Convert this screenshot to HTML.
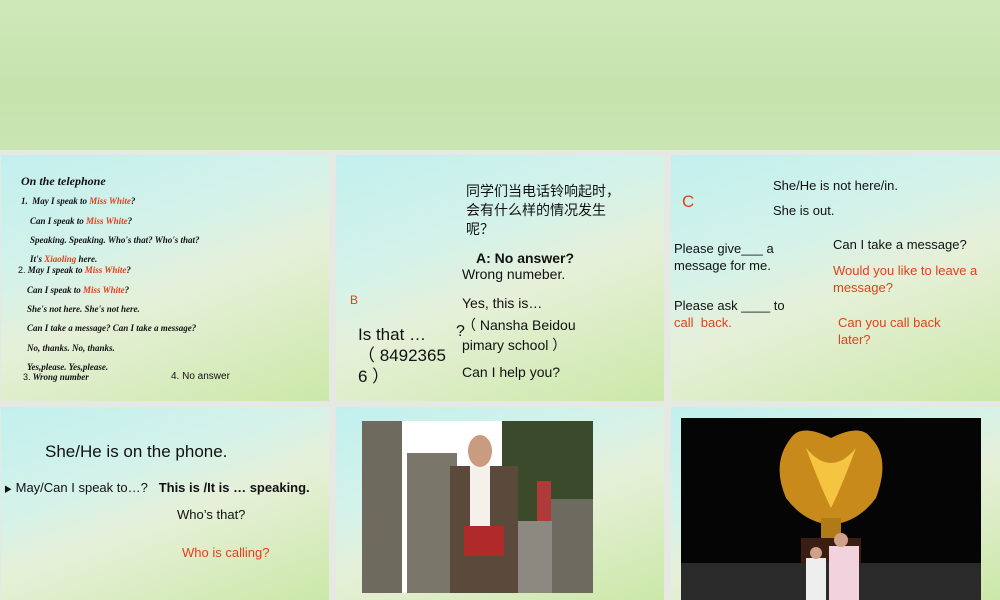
<!DOCTYPE html>
<html><head><meta charset="utf-8"><style>
*{margin:0;padding:0;box-sizing:border-box}
body{width:1000px;height:600px;overflow:hidden;background:#e6e9e3;position:relative;font-family:"Liberation Sans","Noto Sans CJK SC",sans-serif}
.top{position:absolute;left:0;top:0;width:1000px;height:150px;background:linear-gradient(180deg,#cfe8b8 0%,#c6e3ad 60%,#c9e5b2 100%)}
.p{position:absolute;background:linear-gradient(160deg,#c2f0ee 0%,#d4f2ea 35%,#e6f0d8 55%,#cbe8a8 100%);overflow:hidden}
.t{position:absolute;white-space:nowrap;color:#111}
.r{color:#e2401c}
.s{font-family:"Liberation Serif",serif;font-style:italic;font-weight:bold;font-size:9px}
</style></head><body>
<div class="top"></div>

<div class="p" style="left:1px;top:155px;width:328px;height:246px">
<div class="t s" style="left:20px;top:19px;font-size:12px">On the telephone</div>
<div class="t s" style="left:20px;top:41px">1.&nbsp; May I speak to <span class="r">Miss White</span>?</div>
<div class="t s" style="left:29px;top:61px">Can I speak to <span class="r">Miss White</span>?</div>
<div class="t s" style="left:29px;top:80px">Speaking. Speaking. Who's that? Who's that?</div>
<div class="t s" style="left:29px;top:99px">It's <span class="r">Xiaoling</span> here.</div>
<div class="t s" style="left:17px;top:110px"><span style="font-family:'Liberation Sans';font-style:normal;font-weight:normal">2.</span> May I speak to <span class="r">Miss White</span>?</div>
<div class="t s" style="left:26px;top:130px">Can I speak to <span class="r">Miss White</span>?</div>
<div class="t s" style="left:26px;top:149px">She's not here. She's not here.</div>
<div class="t s" style="left:26px;top:168px">Can I take a message? Can I take a message?</div>
<div class="t s" style="left:26px;top:188px">No, thanks. No, thanks.</div>
<div class="t s" style="left:26px;top:207px">Yes,please. Yes,please.</div>
<div class="t s" style="left:22px;top:217px"><span style="font-family:'Liberation Sans';font-style:normal;font-weight:normal">3.</span> Wrong number</div>
<div class="t" style="left:170px;top:216px;font-size:10px">4. No answer</div>
</div>

<div class="p" style="left:336px;top:155px;width:328px;height:246px">
<div class="t" style="left:130px;top:27px;font-size:14px;line-height:19px">同学们当电话铃响起时，<br>会有什么样的情况发生<br>呢？</div>
<div class="t" style="left:140px;top:95px;font-size:14px;font-weight:bold">A: No answer?</div>
<div class="t" style="left:126px;top:111px;font-size:14px">Wrong numeber.</div>
<div class="t r" style="left:14px;top:138px;font-size:12px">B</div>
<div class="t" style="left:126px;top:140px;font-size:14px">Yes, this is…</div>
<div class="t" style="left:126px;top:160px;font-size:14px">（ Nansha Beidou</div>
<div class="t" style="left:126px;top:180px;font-size:14px">pimary school ）</div>
<div class="t" style="left:120px;top:168px;font-size:16px">?</div>
<div class="t" style="left:22px;top:169px;font-size:17px;line-height:21px">Is that …<br>（ 8492365<br>6 ）</div>
<div class="t" style="left:126px;top:209px;font-size:14px">Can I help you?</div>
</div>

<div class="p" style="left:671px;top:155px;width:329px;height:246px">
<div class="t r" style="left:11px;top:37px;font-size:17px">C</div>
<div class="t" style="left:102px;top:23px;font-size:13px">She/He is not here/in.</div>
<div class="t" style="left:102px;top:48px;font-size:13px">She is out.</div>
<div class="t" style="left:3px;top:85px;font-size:13px;line-height:17px">Please give___ a<br>message for me.</div>
<div class="t" style="left:162px;top:82px;font-size:13px">Can I take a message?</div>
<div class="t r" style="left:162px;top:107px;font-size:13px;line-height:17px">Would you like to leave a<br>message?</div>
<div class="t" style="left:3px;top:142px;font-size:13px;line-height:17px">Please ask ____ to<br><span class="r">call&nbsp; back.</span></div>
<div class="t r" style="left:167px;top:159px;font-size:13px;line-height:17px">Can you call back<br>later?</div>
</div>

<div class="p" style="left:1px;top:407px;width:328px;height:193px">
<div class="t" style="left:44px;top:35px;font-size:17px">She/He is on the phone.</div>
<div class="t" style="left:3px;top:73px;font-size:13px"><span style="font-size:8px">▶</span> May/Can I speak to…?&nbsp;&nbsp;&nbsp;<b>This is /It is … speaking.</b></div>
<div class="t" style="left:176px;top:100px;font-size:13px">Who’s that?</div>
<div class="t r" style="left:181px;top:138px;font-size:13px">Who is calling?</div>
</div>

<div class="p" style="left:336px;top:407px;width:328px;height:193px">
<svg style="position:absolute;left:26px;top:14px" width="231" height="172">
<rect width="231" height="172" fill="#ffffff"/>
<rect x="140" y="0" width="91" height="100" fill="#3b4a2a"/>
<rect x="0" y="0" width="40" height="172" fill="#6f6a5e"/>
<rect x="45" y="32" width="50" height="140" fill="#7a766a"/>
<rect x="95" y="90" width="50" height="82" fill="#8a8578"/>
<rect x="185" y="78" width="46" height="94" fill="#6d6b60"/>
<rect x="140" y="100" width="50" height="72" fill="#8c8a80"/>
<rect x="88" y="45" width="68" height="127" fill="#5b4a3c"/>
<rect x="108" y="45" width="20" height="80" fill="#f3f1ea"/>
<ellipse cx="118" cy="30" rx="12" ry="16" fill="#c99c80"/>
<rect x="102" y="105" width="40" height="30" fill="#b02a2a"/>
<rect x="175" y="60" width="14" height="40" fill="#b03a3a"/>
</svg>
</div>

<div class="p" style="left:671px;top:407px;width:329px;height:193px">
<svg style="position:absolute;left:10px;top:11px" width="300" height="182">
<rect width="300" height="182" fill="#050505"/>
<path d="M110 20 Q120 5 150 20 Q180 5 190 20 Q210 40 195 80 Q180 100 160 105 L140 105 Q120 100 105 80 Q90 45 110 20Z" fill="#c98a1c"/>
<path d="M125 30 Q150 60 175 30 Q160 70 150 90 Q140 70 125 30Z" fill="#f5c542"/>
<rect x="140" y="100" width="20" height="20" fill="#b07a16"/>
<rect x="120" y="120" width="60" height="30" fill="#3a1e14"/>
<rect x="0" y="145" width="300" height="37" fill="#2a2a2a"/>
<rect x="125" y="140" width="20" height="42" fill="#eee"/>
<rect x="148" y="128" width="30" height="54" fill="#f2d2dc"/>
<circle cx="160" cy="122" r="7" fill="#d0a088"/>
<circle cx="135" cy="135" r="6" fill="#d0a088"/>
</svg>
</div>
</body></html>
